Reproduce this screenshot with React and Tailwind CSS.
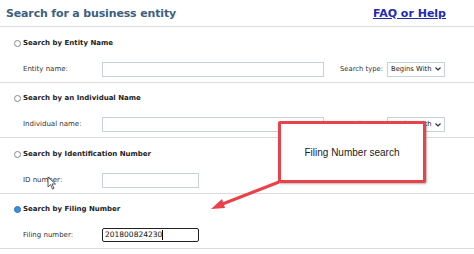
export default function App() {
  const sections = [
    { title: "Search by Entity Name", label: "Entity name:", wide: true, type: true },
    { title: "Search by an Individual Name", label: "Individual name:", wide: true, type: true },
    { title: "Search by Identification Number", label: "ID number:", wide: false },
    { title: "Search by Filing Number", label: "Filing number:", wide: false, checked: true, value: "201800824230" },
  ];

  return (
    <div className="relative w-[474px] h-[254px] overflow-hidden bg-white font-['DejaVu_Sans',sans-serif]">
      <div className="flex items-center justify-between pl-[6px] pr-[28px] h-[27px] border-b border-[#dcdcdc]">
        <h1 className="text-[11px] tracking-[-0.15px] font-bold text-[#3d5f80] leading-none">Search for a business entity</h1>
        <a href="#" className="text-[11px] font-bold text-[#1f2bb0] underline leading-none">FAQ or Help</a>
      </div>

      {sections.map((s) => (
        <div key={s.title} className="h-[55.5px] border-b border-[#dcdcdc] pl-[14px] pt-[11px]">
          <div className="flex items-center gap-[2px] h-[10px]">
            <span
              className={
                s.checked
                  ? "w-[7px] h-[7px] rounded-full bg-[#3b8fe0] border border-[#2a6fc0]"
                  : "w-[7px] h-[7px] rounded-full border border-[#888] bg-white"
              }
            />
            <span className="text-[7px] font-bold text-[#222] whitespace-nowrap">{s.title}</span>
          </div>
          <div className="flex items-center mt-[13.5px] pl-[9px]">
            <span className="w-[79px] text-[7px] text-[#333] whitespace-nowrap">{s.label}</span>
            {s.value ? (
              <div className="w-[97px] h-[14px] border-[1.5px] border-[#222] rounded-[2px] text-[7.5px] text-[#111] flex items-center pl-[2px]">
                {s.value}
                <span className="w-px h-[10px] bg-black" />
              </div>
            ) : (
              <div className={(s.wide ? "w-[222px]" : "w-[97px]") + " h-[15px] border border-[#c8d0d8] bg-white"} />
            )}
            {s.type && (
              <div className="flex items-center ml-[16px]">
                <span className="text-[6.8px] text-[#333] mr-[4px] whitespace-nowrap">Search type:</span>
                <div className="w-[58px] h-[15px] border border-[#c8d0d8] flex items-center justify-between px-[3px]">
                  <span className="text-[6.8px] text-[#222] whitespace-nowrap">Begins With</span>
                  <svg width="6" height="4" viewBox="0 0 6 4">
                    <path d="M0.5 0.5 L3 3 L5.5 0.5" fill="none" stroke="#333" strokeWidth="1.2" />
                  </svg>
                </div>
              </div>
            )}
          </div>
        </div>
      ))}

      <div className="absolute left-[278px] top-[121px] w-[148px] h-[62px] border-[3px] border-[#e8434a] bg-white rounded-[2px] shadow-[1px_1px_2px_rgba(0,0,0,0.3)] flex items-center justify-center">
        <span className="text-[10px] text-[#222] font-['Liberation_Sans',sans-serif]">Filing Number search</span>
      </div>

      <svg className="absolute left-0 top-0" width="474" height="254">
        <line x1="279" y1="182" x2="220" y2="205" stroke="#e8434a" strokeWidth="3" />
        <path d="M211 209 L222 199 L225 208 Z" fill="#e8434a" />
      </svg>

      <svg className="absolute left-[47px] top-[176px]" width="10" height="14" viewBox="0 0 10 14">
        <path d="M1 1 L1 11 L3.5 8.5 L5.5 13 L7 12.3 L5 8 L8.5 8 Z" fill="white" stroke="#333" strokeWidth="0.8" />
      </svg>
    </div>
  );
}
